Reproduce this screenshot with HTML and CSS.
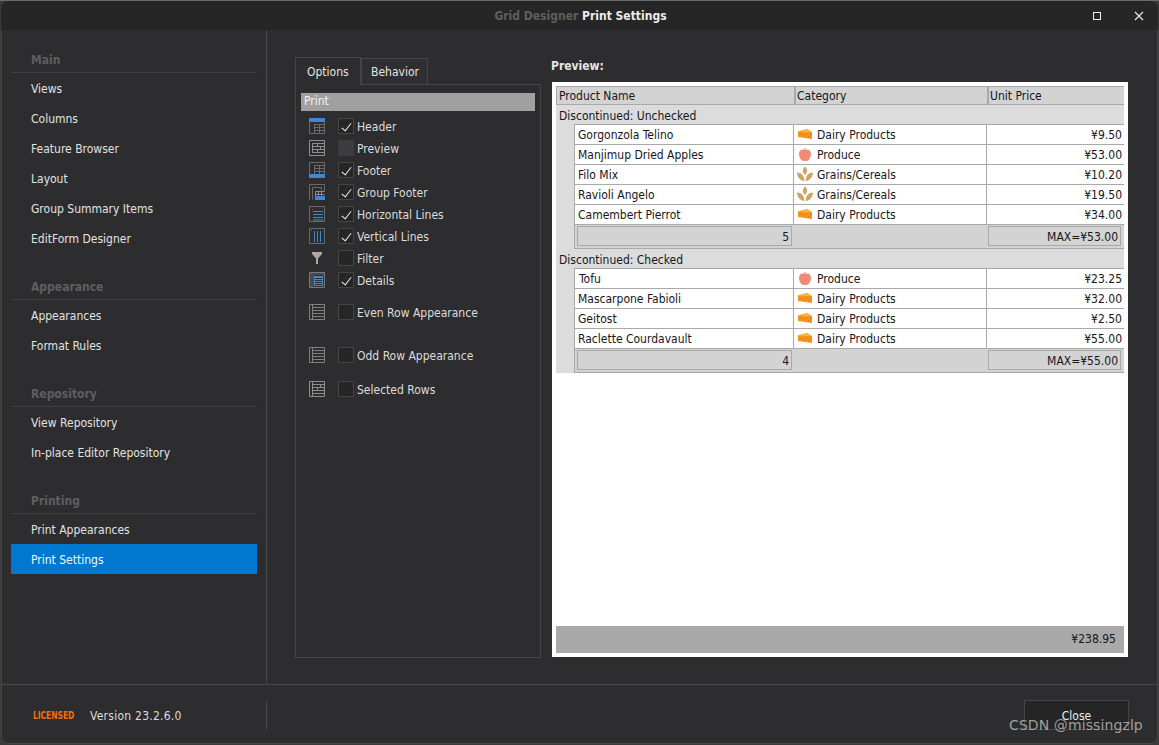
FILE: index.html
```html
<!DOCTYPE html>
<html lang="en">
<head>
<meta charset="utf-8">
<title>Grid Designer Print Settings</title>
<link rel="stylesheet" href="styles.css">
</head>
<body>
<svg class="defs" width="0" height="0" aria-hidden="true">
  <symbol id="cheese" viewBox="0 0 16 16">
    <path d="M1 5.500 10 3l5 3v7L1 11z" fill="#f7931e"/>
    <path d="M1 5.500 10 3l5 3-8 0z" fill="#fdb53f"/>
    <g fill="#cf6f12"><rect x="3" y="8" width="1" height="1"/><rect x="6" y="9" width="1" height="1"/><rect x="9" y="8" width="1" height="1"/><rect x="11" y="10" width="1" height="1"/><rect x="13" y="8" width="1" height="1"/></g>
  </symbol>
  <symbol id="apple" viewBox="0 0 16 16">
    <path d="M8 4C5.500 2.800 2 3.500 2 8c0 3.500 2.400 7 4.500 7 .8 0 1-.3 1.500-.3s.7.300 1.500.300c2.100 0 4.500-3.500 4.500-7 0-4.500-3.500-5.200-6-4z" fill="#f38a78"/>
    <path d="M8 4.500V2" stroke="#d87c6b" stroke-width="1" fill="none"/>
  </symbol>
  <symbol id="wheat" viewBox="0 0 16 16">
    <g fill="#cda566">
      <path d="M8 .5c2.800 2.500 2.800 6 0 8.500-2.800-2.500-2.800-6 0-8.500z"/>
      <path d="M0 6.500c3.800-.2 7.300 2.500 7.400 8.500C3.300 15 .3 11 0 6.500z"/>
      <path d="M16 6.500c-3.800-.2-7.300 2.500-7.400 8.500 4.100 0 7.100-4 7.400-8.500z"/>
    </g>
  </symbol>
</svg>
<div class="desktop-strip"></div>
<main class="window">
  <header class="titlebar">
    <h1 class="title"><span class="title-dim">Grid Designer</span> Print Settings</h1>
    <div class="win-buttons">
      <svg class="win-icon" viewBox="0 0 10 10"><rect x="1.500" y="1.500" width="7" height="7" fill="none" stroke="#eee" stroke-width="1"/></svg>
      <svg class="win-icon" viewBox="0 0 10 10"><path d="M1 1l8 8M9 1l-8 8" stroke="#eee" stroke-width="1.100" fill="none"/></svg>
    </div>
  </header>

  <div class="content">
    <nav class="sidebar">
      <section class="nav-group">
        <h2 class="nav-head">Main</h2>
        <a class="nav-item">Views</a>
        <a class="nav-item">Columns</a>
        <a class="nav-item">Feature Browser</a>
        <a class="nav-item">Layout</a>
        <a class="nav-item">Group Summary Items</a>
        <a class="nav-item">EditForm Designer</a>
      </section>
      <section class="nav-group">
        <h2 class="nav-head">Appearance</h2>
        <a class="nav-item">Appearances</a>
        <a class="nav-item">Format Rules</a>
      </section>
      <section class="nav-group">
        <h2 class="nav-head">Repository</h2>
        <a class="nav-item">View Repository</a>
        <a class="nav-item">In-place Editor Repository</a>
      </section>
      <section class="nav-group">
        <h2 class="nav-head">Printing</h2>
        <a class="nav-item">Print Appearances</a>
        <a class="nav-item nav-item-active">Print Settings</a>
      </section>
    </nav>

    <div class="workspace">
      <section class="options">
        <div class="tabs">
          <div class="tab tab-active">Options</div>
          <div class="tab">Behavior</div>
        </div>
        <div class="tab-panel">
          <div class="band">Print</div>
          <div class="opt">
            <svg class="opt-icon" viewBox="0 0 16 16"><path d="M.5 3.500h15v12H.5zM5.500 6v9.500M10.500 6v9.500M5.500 6.500h10M5.500 9.500h10M5.500 12.500h10" fill="none" stroke="#6a6a6a"/><rect width="16" height="4" fill="#3f87d0"/></svg>
            <span class="check on"></span><span class="opt-label">Header</span>
          </div>
          <div class="opt">
            <svg class="opt-icon" viewBox="0 0 16 16"><path d="M.5.500h15v15H.5zM3.500 3.500h12M3.500 6.500h12M3.500 9.500h12M3.500 12.500h12M3.500 3.500v9M8.500 3.500v3M11.500 6.500v3M8.500 9.500v3" fill="none" stroke="#8e8e8e"/></svg>
            <span class="check check-disabled"></span><span class="opt-label">Preview</span>
          </div>
          <div class="opt">
            <svg class="opt-icon" viewBox="0 0 16 16"><path d="M.5.500h15v12H.5zM5.500 3v10M10.500 3v10M5.500 3.500h10M5.500 6.500h10M5.500 9.500h10" fill="none" stroke="#6a6a6a"/><rect y="12" width="16" height="4" fill="#3f87d0"/></svg>
            <span class="check on"></span><span class="opt-label">Footer</span>
          </div>
          <div class="opt">
            <svg class="opt-icon" viewBox="0 0 16 16"><path d="M.5 15.500V.5h15v7M3.500 15.500v-12h9v3" fill="none" stroke="#6a6a6a"/><path d="M6.500 7.500h9M6.500 10.500h9M9.500 7.500v4M12.500 7.500v4M6.500 7.500v5" fill="none" stroke="#8e8e8e"/><rect x="6" y="12" width="10" height="4" fill="#3f87d0"/></svg>
            <span class="check on"></span><span class="opt-label">Group Footer</span>
          </div>
          <div class="opt">
            <svg class="opt-icon" viewBox="0 0 16 16"><path d="M.5.500h15v15H.5zM3 3.500h1" fill="none" stroke="#6a6a6a"/><path d="M4 5.500h10M4 8.500h10M4 11.500h10M4 14h10" stroke="#3f87d0" fill="none"/></svg>
            <span class="check on"></span><span class="opt-label">Horizontal Lines</span>
          </div>
          <div class="opt">
            <svg class="opt-icon" viewBox="0 0 16 16"><path d="M.5.500h15v15H.5zM2 2.500h1" fill="none" stroke="#6a6a6a"/><path d="M5.500 3v11M8.500 3v11M11.500 3v11" stroke="#3f87d0" fill="none"/></svg>
            <span class="check on"></span><span class="opt-label">Vertical Lines</span>
          </div>
          <div class="opt">
            <svg class="opt-icon" viewBox="0 0 16 16"><path d="M3 2h10v2L9 8.500V14H7V8.500L3 4z" fill="#a8a8a8"/></svg>
            <span class="check"></span><span class="opt-label">Filter</span>
          </div>
          <div class="opt">
            <svg class="opt-icon" viewBox="0 0 16 16"><path d="M.5.500h15v15H.5z" fill="#4a4a4c" stroke="#7a7a7a"/><rect x="5" y="3" width="10" height="12" fill="#2d2d2f"/><rect x="5" y="4" width="9" height="10" fill="#3f87d0"/><path d="M6 6.500h7M6 8.500h7M6 10.500h7M6 12.500h7" stroke="#2d2d2f" fill="none"/></svg>
            <span class="check on"></span><span class="opt-label">Details</span>
          </div>
          <div class="opt opt-even">
            <svg class="opt-icon" viewBox="0 0 16 16"><path d="M.5.500h15v15H.5zM3.500 1v14" fill="none" stroke="#7f7f7f"/><path d="M4 3.500h11M4 6.500h11M4 9.500h11M4 12.500h11" stroke="#7f7f7f" fill="none"/></svg>
            <span class="check"></span><span class="opt-label">Even Row Appearance</span>
          </div>
          <div class="opt opt-odd">
            <svg class="opt-icon" viewBox="0 0 16 16"><path d="M.5.500h15v15H.5zM3.500 1v14" fill="none" stroke="#7f7f7f"/><path d="M4 3.500h11M4 6.500h11M4 9.500h11M4 12.500h11" stroke="#7f7f7f" fill="none"/></svg>
            <span class="check"></span><span class="opt-label">Odd Row Appearance</span>
          </div>
          <div class="opt opt-selected">
            <svg class="opt-icon" viewBox="0 0 16 16"><path d="M.5.500h15v15H.5zM3.500 3.500h12M3.500 6.500h12M3.500 9.500h12M3.500 12.500h12M3.500 1v14M8.500 6.500v3M11.500 3.500v3" fill="none" stroke="#8e8e8e"/></svg>
            <span class="check"></span><span class="opt-label">Selected Rows</span>
          </div>
        </div>
      </section>

      <section class="preview">
        <h2 class="preview-title">Preview:</h2>
        <div class="sheet">
          <div class="col-head">
            <div class="col-name">Product Name</div>
            <div class="col-cat">Category</div>
            <div class="col-price">Unit Price</div>
          </div>

          <div class="group-title">Discontinued: Unchecked</div>
          <div class="group-body">
            <div class="row"><div class="c-name">Gorgonzola Telino</div><div class="c-cat"><svg class="cat-icon"><use href="#cheese"/></svg>Dairy Products</div><div class="c-price">¥9.50</div></div>
            <div class="row"><div class="c-name">Manjimup Dried Apples</div><div class="c-cat"><svg class="cat-icon"><use href="#apple"/></svg>Produce</div><div class="c-price">¥53.00</div></div>
            <div class="row"><div class="c-name">Filo Mix</div><div class="c-cat"><svg class="cat-icon"><use href="#wheat"/></svg>Grains/Cereals</div><div class="c-price">¥10.20</div></div>
            <div class="row"><div class="c-name">Ravioli Angelo</div><div class="c-cat"><svg class="cat-icon"><use href="#wheat"/></svg>Grains/Cereals</div><div class="c-price">¥19.50</div></div>
            <div class="row"><div class="c-name">Camembert Pierrot</div><div class="c-cat"><svg class="cat-icon"><use href="#cheese"/></svg>Dairy Products</div><div class="c-price">¥34.00</div></div>
            <div class="sum"><div class="sum-box">5</div><div class="sum-box">MAX=¥53.00</div></div>
          </div>

          <div class="group-title">Discontinued: Checked</div>
          <div class="group-body">
            <div class="row"><div class="c-name c-name-tofu">Tofu</div><div class="c-cat"><svg class="cat-icon"><use href="#apple"/></svg>Produce</div><div class="c-price">¥23.25</div></div>
            <div class="row"><div class="c-name">Mascarpone Fabioli</div><div class="c-cat"><svg class="cat-icon"><use href="#cheese"/></svg>Dairy Products</div><div class="c-price">¥32.00</div></div>
            <div class="row"><div class="c-name">Geitost</div><div class="c-cat"><svg class="cat-icon"><use href="#cheese"/></svg>Dairy Products</div><div class="c-price">¥2.50</div></div>
            <div class="row"><div class="c-name">Raclette Courdavault</div><div class="c-cat"><svg class="cat-icon"><use href="#cheese"/></svg>Dairy Products</div><div class="c-price">¥55.00</div></div>
            <div class="sum"><div class="sum-box">4</div><div class="sum-box">MAX=¥55.00</div></div>
          </div>

          <div class="grand-total">¥238.95</div>
        </div>
      </section>
    </div>
  </div>

  <footer class="footer">
    <div class="footer-left">
      <span class="licensed">LICENSED</span>
      <span class="version">Version 23.2.6.0</span>
    </div>
    <div class="footer-right">
      <button class="close-btn" type="button">Close</button>
    </div>
  </footer>
</main>
<div class="watermark">CSDN @missingzlp</div>
</body>
</html>
```

FILE: styles.css
```css
* { box-sizing: border-box; }
html, body { margin: 0; height: 100%; }
body {
  position: relative;
  width: 1159px;
  height: 745px;
  overflow: hidden;
  background: #3a3a3a;
  font-family: "DejaVu Sans Condensed", "DejaVu Sans", sans-serif;
  font-size: 12px;
  color: #e4e4e4;
}
.defs { position: absolute; }
.desktop-strip { height: 1px; background: #6a6a6a; }
.window {
  display: flex;
  flex-direction: column;
  height: 743px;
  width: 1157px;
  margin-left: 1px;
  background: #2d2d2f;
  border-radius: 7px;
  box-shadow: inset 0 0 0 1px #454547;
  overflow: hidden;
}
.titlebar {
  position: relative;
  flex: none;
  height: 29px;
  display: flex;
  align-items: center;
  justify-content: center;
  padding-left: 2px;
  background: #262626;
}
.title { margin: 0; font-size: 12px; font-weight: 700; color: #ececec; }
.title-dim { color: #5f5f5f; }
.win-buttons {
  position: absolute;
  right: 14px;
  top: 0;
  height: 29px;
  display: flex;
  align-items: center;
  gap: 32px;
}
.win-icon { width: 10px; height: 10px; display: block; }

.content { flex: 1; display: flex; min-height: 0; }
.sidebar {
  flex: none;
  width: 266px;
  padding: 16px 9px 0 10px;
  border-right: 1px solid #48484a;
}
.nav-group { margin-bottom: 20px; }
.nav-head {
  margin: 0;
  height: 27px;
  padding: 8px 0 0 20px;
  line-height: 13px;
  font-size: 12px;
  font-weight: 700;
  color: #5f5f61;
  border-bottom: 1px solid #3f3f41;
}
.nav-item {
  display: block;
  height: 30px;
  line-height: 32px;
  padding-left: 20px;
  color: #e2e2e2;
}
.nav-item-active { background: #0078d0; color: #f5f5f5; }

.workspace { flex: 1; display: flex; padding: 27px 0 26px 28px; min-width: 0; }
.options { flex: none; width: 246px; display: flex; flex-direction: column; }
.tabs { display: flex; height: 28px; position: relative; z-index: 1; }
.tab {
  width: 67px;
  height: 26px;
  margin-top: 1px;
  padding: 0 9px;
  line-height: 27px;
  background: #2f2f31;
  border: 1px solid #454547;
  border-bottom: none;
}
.tab-active {
  height: 28px;
  margin-top: 0;
  width: 66px;
  padding: 0 11px;
  line-height: 29px;
  background: #2d2d2f;
}
.tab-panel {
  flex: 1;
  margin-top: -1px;
  padding: 8px 5px 0;
  border: 1px solid #454547;
}
.band {
  height: 18px;
  line-height: 17px;
  padding-left: 3px;
  margin-bottom: 4px;
  background: #a0a0a0;
  color: #f2f2f2;
}
.opt { display: flex; align-items: center; height: 22px; padding-left: 8px; }
.opt-even { margin-top: 10px; }
.opt-odd { margin-top: 21px; }
.opt-selected { margin-top: 12px; }
.opt-icon { flex: none; width: 16px; height: 16px; margin-right: 13px; display: block; }
.check {
  position: relative;
  flex: none;
  width: 16px;
  height: 16px;
  margin-right: 3px;
  background: #262627;
  border: 1px solid #454547;
}
.check-disabled { background: #3c3c3e; border-color: #3c3c3e; }
.check.on::after {
  content: "";
  position: absolute;
  left: 5px;
  top: 2px;
  width: 4px;
  height: 9px;
  border: solid #e6e6e6;
  border-width: 0 1px 1px 0;
  transform: rotate(38deg);
}
.opt-label { color: #dcdcdc; padding-top: 2px; }

.preview { flex: none; width: 577px; margin-left: 10px; display: flex; flex-direction: column; }
.preview-title {
  margin: 0;
  height: 25px;
  padding-top: 2px;
  line-height: 15px;
  font-size: 12px;
  font-weight: 700;
  color: #e6e6e6;
}
.sheet {
  flex: none;
  margin-left: 1px;
  width: 576px;
  height: 575px;
  padding: 4px;
  background: #fff;
  display: flex;
  flex-direction: column;
  color: #16161e;
}
.col-head {
  display: grid;
  grid-template-columns: 237px 193px 1fr;
  height: 19px;
  line-height: 19px;
  background: #d3d3d3;
  border: solid #a9a9a9;
  border-width: 1px 0 1px 1px;
}
.col-name { padding-left: 2px; }
.col-cat, .col-price { padding-left: 1px; border-left: 2px solid #a9a9a9; }
.group-title {
  height: 19px;
  line-height: 22px;
  padding-left: 3px;
  background: #dcdcdc;
}
.group-body {
  background: #dcdcdc;
  padding-left: 18px;
}
.row {
  display: grid;
  grid-template-columns: 219px 193px 1fr;
  height: 21px;
  margin-bottom: -1px;
  line-height: 21px;
  background: #fff;
  border: solid #a9a9a9;
  border-width: 1px 0 1px 1px;
}
.c-name { height: 19px; padding-left: 3px; border-right: 1px solid #a9a9a9; }
.c-name-tofu { padding-left: 4px; }
.c-cat { height: 19px; padding-left: 3px; border-right: 1px solid #a9a9a9; display: flex; align-items: flex-start; }
.cat-icon { flex: none; width: 16px; height: 16px; margin: 1px 4px 0 0; }
.c-price { height: 19px; text-align: right; padding-right: 2px; }
.sum {
  display: grid;
  grid-template-columns: 215px 133px;
  justify-content: space-between;
  height: 24px;
  margin-top: 1px;
  padding: 1px 3px 0 2px;
  align-content: start;
  background: #d3d3d3;
  border-left: 1px solid #a9a9a9;
  border-bottom: 1px solid #a9a9a9;
}
.sum-box {
  height: 20px;
  line-height: 20px;
  padding-right: 2px;
  text-align: right;
  background: #d3d3d3;
  border: 1px solid #a9a9a9;
}
.grand-total {
  margin-top: auto;
  height: 27px;
  line-height: 27px;
  padding-right: 8px;
  text-align: right;
  background: #a9a9a9;
  color: #16161e;
}

.footer { flex: none; height: 60px; display: flex; align-items: center; border-top: 1px solid #48484a; }
.footer-left {
  width: 266px;
  height: 30px;
  display: flex;
  align-items: center;
  border-right: 1px solid #48484a;
  padding: 2px 0 0 32px;
}
.licensed {
  flex: none;
  width: 57px;
  font-size: 11px;
  font-weight: 700;
  color: #f36f0e;
  transform: scaleX(.76);
  transform-origin: left center;
  white-space: nowrap;
}
.version { color: #dcdcdc; letter-spacing: .25px; }
.footer-right { flex: 1; display: flex; justify-content: flex-end; padding-right: 29px; }
.close-btn {
  width: 105px;
  height: 30px;
  padding: 2px 0 0;
  background: #252526;
  border: 1px solid #454547;
  color: #ededed;
  font: inherit;
}
.watermark {
  position: absolute;
  left: 1009px;
  top: 716px;
  font-family: "DejaVu Sans", sans-serif;
  font-size: 14px;
  line-height: 18px;
  letter-spacing: .1px;
  color: rgba(200, 200, 200, .75);
  white-space: nowrap;
}
```
